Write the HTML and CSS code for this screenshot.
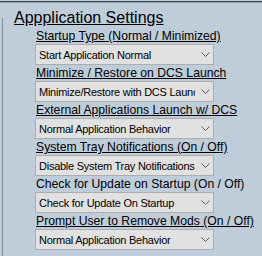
FILE: index.html
```html
<!DOCTYPE html>
<html>
<head>
<meta charset="utf-8">
<link rel="stylesheet" href="styles.css">
</head>
<body>
<div class="topline"></div>
<div class="title">Appplication Settings</div>
<div class="panel">
  <div class="row">
    <div class="label u">Startup Type (Normal / Minimized)</div>
    <div class="select"><span class="val">Start Application Normal</span><svg class="chev" width="9" height="5" viewBox="0 0 9 5"><polyline points="0.5,0.5 4.5,4.5 8.5,0.5" fill="none" stroke="#5c5c5c" stroke-width="1"/></svg></div>
  </div>
  <div class="row">
    <div class="label u">Minimize / Restore on DCS Launch</div>
    <div class="select"><span class="val">Minimize/Restore with DCS Launch</span><svg class="chev" width="9" height="5" viewBox="0 0 9 5"><polyline points="0.5,0.5 4.5,4.5 8.5,0.5" fill="none" stroke="#5c5c5c" stroke-width="1"/></svg></div>
  </div>
  <div class="row">
    <div class="label u">External Applications Launch w/ DCS</div>
    <div class="select"><span class="val">Normal Application Behavior</span><svg class="chev" width="9" height="5" viewBox="0 0 9 5"><polyline points="0.5,0.5 4.5,4.5 8.5,0.5" fill="none" stroke="#5c5c5c" stroke-width="1"/></svg></div>
  </div>
  <div class="row">
    <div class="label u">System Tray Notifications (On / Off)</div>
    <div class="select"><span class="val">Disable System Tray Notifications</span><svg class="chev" width="9" height="5" viewBox="0 0 9 5"><polyline points="0.5,0.5 4.5,4.5 8.5,0.5" fill="none" stroke="#5c5c5c" stroke-width="1"/></svg></div>
  </div>
  <div class="row">
    <div class="label">Check for Update on Startup (On / Off)</div>
    <div class="select"><span class="val">Check for Update On Startup</span><svg class="chev" width="9" height="5" viewBox="0 0 9 5"><polyline points="0.5,0.5 4.5,4.5 8.5,0.5" fill="none" stroke="#5c5c5c" stroke-width="1"/></svg></div>
  </div>
  <div class="row">
    <div class="label u">Prompt User to Remove Mods (On / Off)</div>
    <div class="select"><span class="val">Normal Application Behavior</span><svg class="chev" width="9" height="5" viewBox="0 0 9 5"><polyline points="0.5,0.5 4.5,4.5 8.5,0.5" fill="none" stroke="#5c5c5c" stroke-width="1"/></svg></div>
  </div>
</div>
</body>
</html>
```
FILE: styles.css
```css
html, body {
  margin: 0;
  padding: 0;
}
body {
  background: #bfcdda;
  width: 262px;
  height: 256px;
  overflow: hidden;
  font-family: "Liberation Sans", Arial, sans-serif;
  color: #000;
}
.topline {
  margin-top: 1px;
  height: 1px;
  background: #3e4c5a;
  border-bottom: 1px solid #8e9caa;
}
.title {
  margin-top: 6px;
  margin-left: 14px;
  font-size: 16px;
  line-height: 18px;
  height: 18px;
  text-decoration: underline;
  white-space: nowrap;
}
.panel {
  margin-top: -9px;
  margin-left: 2px;
  border-left: 1px solid #808d9a;
  padding-top: 10px;
  padding-left: 32px;
  height: 240px;
  box-sizing: border-box;
}
.row {
  display: flex;
  flex-direction: column;
}
.label {
  margin-left: 1px;
  font-size: 12.2px;
  line-height: 16px;
  height: 16px;
  white-space: nowrap;
}
.label.u {
  text-decoration: underline;
}
.select {
  width: 179px;
  height: 21px;
  box-sizing: border-box;
  background: #e1e1e1;
  border: 1px solid #adadad;
  display: flex;
  align-items: center;
  padding-left: 3px;
  padding-top: 1px;
}
.val {
  flex: none;
  width: 156px;
  overflow: hidden;
  white-space: nowrap;
  font-size: 11px;
  letter-spacing: -0.25px;
  line-height: 14px;
}
.chev {
  flex: none;
  margin-left: auto;
  margin-right: 3px;
  margin-bottom: 2px;
}
```
